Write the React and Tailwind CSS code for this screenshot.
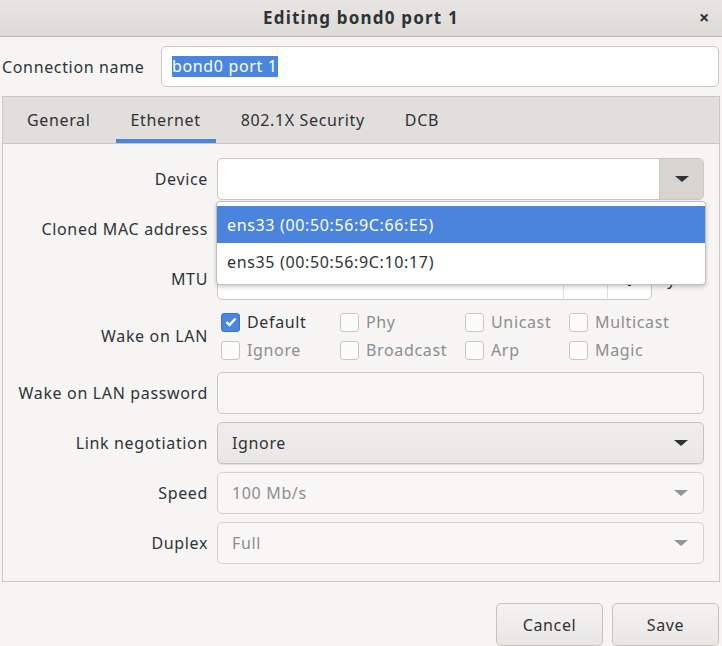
import React from "react";

const font = { fontFamily: '"Noto Sans", "Open Sans", sans-serif', letterSpacing: "0.65px" };

const Arrow = ({ dim }) => (
  <svg width="16" height="8" viewBox="0 0 16 8">
    <path d="M1 1 L15 1 L8 7 Z" fill={dim ? "#929595" : "#2e3436"} />
  </svg>
);

const Check = ({ label, checked, disabled }) => (
  <div className="flex items-center gap-[7px] h-[28px]">
    <div
      className={
        checked
          ? "w-[19px] h-[19px] rounded-[3px] bg-[#4a86df] border border-[#3a73c8] flex items-center justify-center"
          : "w-[19px] h-[19px] rounded-[3px] bg-[#fbfbfa] border border-[#cdc7c2]"
      }
    >
      {checked && (
        <svg width="12" height="10" viewBox="0 0 12 10">
          <path d="M1.5 5 L4.5 8 L10.5 1.5" stroke="white" strokeWidth="2.4" fill="none" />
        </svg>
      )}
    </div>
    <span className={disabled ? "text-[#8b8e8f]" : "text-[#2e3436]"}>{label}</span>
  </div>
);

const Label = ({ children }) => (
  <div className="flex items-center justify-end text-[#2e3436] whitespace-nowrap">{children}</div>
);

export default function App() {
  return (
    <div style={font} className="w-[722px] h-[646px] bg-[#f6f5f4] text-[16px] text-[#2e3436] overflow-hidden flex flex-col">
      {/* title bar */}
      <div className="h-[37px] shrink-0 flex items-center justify-center relative bg-gradient-to-b from-[#e8e6e3] to-[#dedad6] border-b border-[#c0b9b2]">
        <span className="font-bold text-[17px] tracking-[1.2px] text-[#2e3436]">Editing bond0 port 1</span>
        <span className="absolute right-[12px] top-[4px] text-[18px] font-bold">×</span>
      </div>

      {/* connection name */}
      <div className="flex items-center mt-[9px] pl-[2px] pr-[3px]">
        <span className="w-[159px] shrink-0 whitespace-nowrap">Connection name</span>
        <div className="flex-1 h-[41px] bg-white border border-[#cdc7c2] rounded-[5px] flex items-center px-[10px]">
          <span className="bg-[#4a86df] text-white leading-[21px]">bond0 port 1</span>
        </div>
      </div>

      {/* notebook */}
      <div className="mt-[9px] mx-[2px] border border-[#cdc7c2] flex flex-col h-[486px]">
        <div className="h-[47px] bg-[#e1dedb] border-b border-[#cdc7c2] flex items-stretch gap-[10px] pl-[9px]">
          {["General", "Ethernet", "802.1X Security", "DCB"].map((t) => (
            <div
              key={t}
              className={
                t === "Ethernet"
                  ? "px-[15px] flex items-center border-b-[4px] border-[#4a86df] pt-[4px] text-[#2e3436] whitespace-nowrap"
                  : "px-[15px] flex items-center text-[#2e3436] whitespace-nowrap"
              }
            >
              {t}
            </div>
          ))}
        </div>

        <div className="relative flex-1 pt-[14px] pr-[15px]">
          <div className="grid grid-cols-[205px_1fr] gap-x-[9px] gap-y-[8px]">
            <Label>Device</Label>
            <div className="h-[42px] bg-white border border-[#cdc7c2] rounded-[5px] flex overflow-hidden">
              <div className="flex-1" />
              <div className="w-[44px] bg-[#d8d4d0] border-l border-[#cdc7c2] flex items-center justify-center">
                <Arrow />
              </div>
            </div>

            <Label>Cloned MAC address</Label>
            <div className="h-[42px] bg-white border border-[#cdc7c2] rounded-[5px]" />

            <Label>MTU</Label>
            <div className="flex items-center">
              <div className="w-[435px] h-[42px] bg-white border border-[#cdc7c2] rounded-[5px] flex items-center overflow-hidden">
                <span className="flex-1 px-[10px]">automatic</span>
                <div className="w-[44px] h-full border-l border-[#e2dedb]" />
                <div className="w-[44px] h-full border-l border-[#e2dedb] flex items-center justify-center">
                  <div className="w-[3px] h-[3px] bg-[#2e3436] mt-[10px]" />
                </div>
              </div>
              <span className="ml-[5px]">bytes</span>
            </div>

            <Label>Wake on LAN</Label>
            <div className="grid grid-cols-[119px_125px_104px_1fr] pl-[4px]">
              <Check label="Default" checked />
              <Check label="Phy" disabled />
              <Check label="Unicast" disabled />
              <Check label="Multicast" disabled />
              <Check label="Ignore" disabled />
              <Check label="Broadcast" disabled />
              <Check label="Arp" disabled />
              <Check label="Magic" disabled />
            </div>

            <Label>Wake on LAN password</Label>
            <div className="h-[42px] bg-[#f8f7f6] border border-[#cdc7c2] rounded-[5px]" />

            <Label>Link negotiation</Label>
            <div className="h-[42px] bg-gradient-to-b from-[#f0eeec] to-[#e9e7e4] border border-[#c8c2bc] rounded-[5px] flex items-center justify-between pl-[14px] pr-[14px] shadow-[0_1px_0_rgba(0,0,0,0.07)]">
              <span>Ignore</span>
              <Arrow />
            </div>

            <Label>Speed</Label>
            <div className="h-[42px] bg-[#f8f7f6] border border-[#d6d1cd] rounded-[5px] flex items-center justify-between pl-[14px] pr-[14px]">
              <span className="text-[#8b8e8f]">100 Mb/s</span>
              <Arrow dim />
            </div>

            <Label>Duplex</Label>
            <div className="h-[42px] bg-[#f8f7f6] border border-[#d6d1cd] rounded-[5px] flex items-center justify-between pl-[14px] pr-[14px]">
              <span className="text-[#8b8e8f]">Full</span>
              <Arrow dim />
            </div>
          </div>

          {/* dropdown popup */}
          <div className="absolute left-[213px] top-[57px] w-[490px] bg-white border border-[#c3bdb7] rounded-[4px] shadow-[0_2px_4px_rgba(0,0,0,0.2)] py-[4px]">
            <div className="h-[37px] bg-[#4a84dc] text-white flex items-center px-[10px]">
              ens33 (00:50:56:9C:66:E5)
            </div>
            <div className="h-[37px] flex items-center px-[10px]">ens35 (00:50:56:9C:10:17)</div>
          </div>
        </div>
      </div>

      {/* buttons */}
      <div className="flex justify-end gap-[9px] pr-[3px] mt-[21px]">
        <button className="w-[107px] h-[43px] rounded-[5px] border border-[#c8c2bc] bg-gradient-to-b from-[#f4f3f2] to-[#e9e7e4] text-[#2e3436]">
          Cancel
        </button>
        <button className="w-[107px] h-[43px] rounded-[5px] border border-[#c8c2bc] bg-gradient-to-b from-[#f4f3f2] to-[#e9e7e4] text-[#2e3436]">
          Save
        </button>
      </div>
    </div>
  );
}
